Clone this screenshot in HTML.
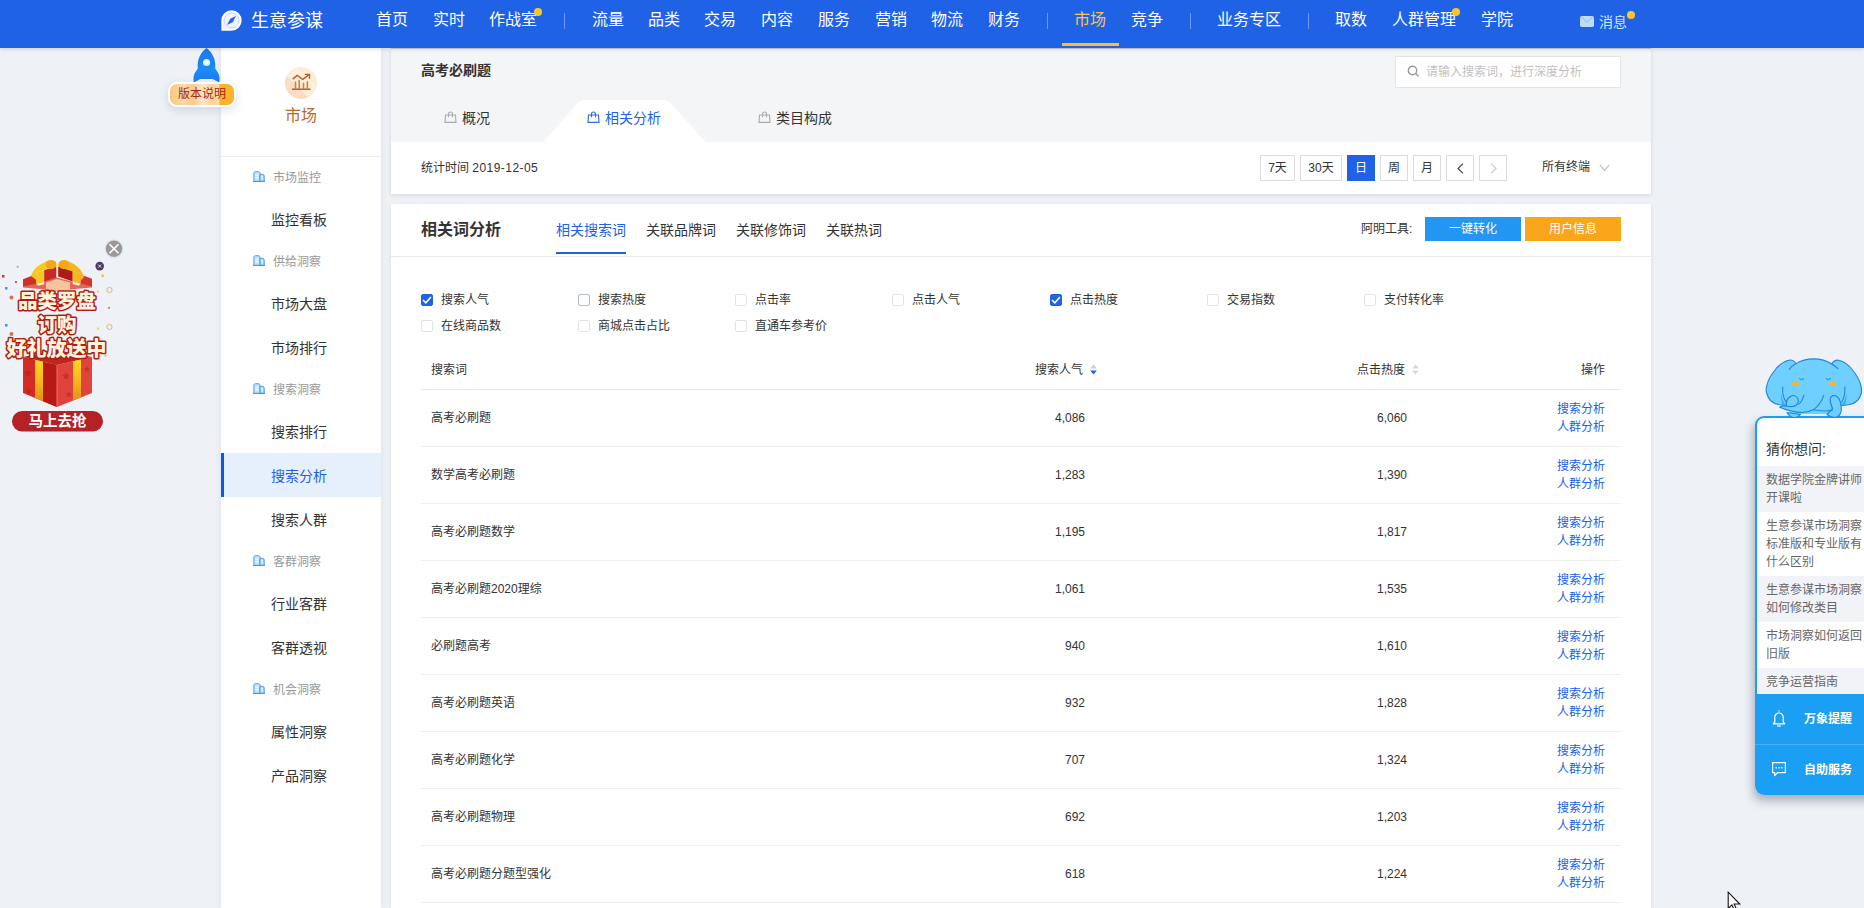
<!DOCTYPE html>
<html lang="zh-CN">
<head>
<meta charset="utf-8">
<title>生意参谋</title>
<style>
*{box-sizing:border-box;margin:0;padding:0}
html,body{width:1864px;height:908px;overflow:hidden}
body{background:#eef1f6;font-family:"Liberation Sans","Noto Sans CJK SC",sans-serif;color:#333;font-size:12px;position:relative}
.abs{position:absolute;white-space:nowrap}
/* top bar */
#top{position:absolute;left:0;top:0;width:1864px;height:48px;background:#2062e6;box-shadow:0 1px 4px rgba(0,0,0,.15);z-index:5}
#top .n{position:absolute;top:0;height:40px;line-height:40px;font-size:16px;color:#fff;white-space:nowrap}
#top .sep{position:absolute;top:13px;width:1px;height:16px;background:rgba(255,255,255,.35)}
#top .dot{position:absolute;width:8px;height:8px;border-radius:50%;background:#f9c623}
/* sidebar */
#side{position:absolute;left:221px;top:48px;width:160px;height:860px;background:#fff;box-shadow:0 0 7px rgba(60,80,140,.10)}
#side .g{position:absolute;left:52px;font-size:12px;color:#999;line-height:16px;white-space:nowrap}
#side .i{position:absolute;left:0;width:160px;height:44px;line-height:44px;padding-left:50px;font-size:14px;color:#333;white-space:nowrap}
#side .i.on{background:#e6effc;color:#2062e6;border-left:3px solid #0b5be8;padding-left:47px}
#side svg.gi{position:absolute;left:32px;width:12px;height:11px;margin-top:1px}
/* panels */
#p1{position:absolute;left:391px;top:48px;width:1260px;height:146px;background:#f4f5f7;box-shadow:0 1px 4px rgba(20,30,60,.13),inset 0 1px 0 #c9cedc}
#p1w{position:absolute;left:0;top:94px;width:1260px;height:52px;background:#fff}
#p2{position:absolute;left:391px;top:204px;width:1260px;height:704px;background:#fff;box-shadow:0 1px 4px rgba(20,30,60,.10)}
.btn{position:absolute;top:107px;height:26px;border:1px solid #dcdcdc;background:#fff;font-size:12px;line-height:24px;text-align:center;color:#333}
.btn.on{background:#2062e6;border-color:#2062e6;color:#fff}
.cb{position:absolute;width:12px;height:12px;border:1px solid #e2e2e2;border-radius:2px;background:#fff}
.cb.on{background:#2062e6;border-color:#2062e6}
.cb svg{position:absolute;left:0;top:0}
.cl{position:absolute;font-size:12px;line-height:16px;color:#333;white-space:nowrap}
.row{position:absolute;left:30px;width:1200px;height:57px;border-bottom:1px solid #efefef}
.row .k{position:absolute;left:10px;top:20px;line-height:16px;font-size:12px;color:#333}
.row .v1{position:absolute;right:536px;top:20px;line-height:16px;font-size:12px;color:#333}
.row .v2{position:absolute;right:214px;top:20px;line-height:16px;font-size:12px;color:#333}
.row .a{position:absolute;right:16px;top:10px;line-height:18px;font-size:12px;color:#2062e6;text-align:right}
.q{position:absolute;left:0;width:130px;padding:5px 0 0 9px;font-size:12px;line-height:18px;color:#666;white-space:nowrap}
</style>
</head>
<body>
<div id="top">
  <svg class="abs" style="left:221px;top:10px" width="21" height="21" viewBox="0 0 21 21"><path d="M10.5 1.2A9.3 9.3 0 1 1 10.5 19.8H1.2V10.5A9.3 9.3 0 0 1 10.5 1.2Z" fill="#eef3fe" stroke="#fff" stroke-width="1.7"/><circle cx="10.5" cy="10.5" r="7.3" fill="none" stroke="#b9cff8" stroke-width=".7"/><path d="M15 6L9.2 8.8 6 15l5.8-2.8Z" fill="#2a68e6"/></svg>
  <div class="n" style="left:251px;font-size:18px;top:1px;line-height:41px">生意参谋</div>
  <div class="n" style="left:376px">首页</div>
  <div class="n" style="left:433px">实时</div>
  <div class="n" style="left:489px">作战室</div>
  <div class="dot" style="left:534px;top:8px"></div>
  <div class="sep" style="left:564px"></div>
  <div class="n" style="left:592px">流量</div>
  <div class="n" style="left:648px">品类</div>
  <div class="n" style="left:704px">交易</div>
  <div class="n" style="left:761px">内容</div>
  <div class="n" style="left:818px">服务</div>
  <div class="n" style="left:875px">营销</div>
  <div class="n" style="left:931px">物流</div>
  <div class="n" style="left:988px">财务</div>
  <div class="sep" style="left:1047px"></div>
  <div class="n" style="left:1074px;color:#ffc34d">市场</div>
  <div class="abs" style="left:1062px;top:43px;width:57px;height:3px;background:#fbc02d"></div>
  <div class="n" style="left:1131px">竞争</div>
  <div class="sep" style="left:1190px"></div>
  <div class="n" style="left:1217px">业务专区</div>
  <div class="sep" style="left:1308px"></div>
  <div class="n" style="left:1335px">取数</div>
  <div class="n" style="left:1392px">人群管理</div>
  <div class="dot" style="left:1452px;top:8px"></div>
  <div class="n" style="left:1481px">学院</div>
  <svg class="abs" style="left:1580px;top:16px" width="14" height="11" viewBox="0 0 14 11"><rect x="0" y="0" width="14" height="11" rx="1.8" fill="#bddcf7"/><path d="M1.800 1.200l5.200 5.200 5.200-5.200" fill="none" stroke="#86bdf2" stroke-width="1"/></svg>
  <div class="n" style="left:1599px;font-size:14px;top:2px;color:#d0e6fb">消息</div>
  <div class="dot" style="left:1627px;top:11px"></div>
</div>

<svg class="abs" style="left:193px;top:48px;z-index:2" width="27" height="35" viewBox="0 0 27 35"><defs><linearGradient id="rk" x1="0" y1="0" x2="0" y2="1"><stop offset="0" stop-color="#1b76ee"/><stop offset=".6" stop-color="#1c8df6"/><stop offset="1" stop-color="#1a7af0"/></linearGradient></defs><path d="M13.500 0C7 5 4 12 4.800 20.500L1.800 25C.400 27.500.200 31 .800 34.500l6.500-3.500h12.400l6.500 3.500c.600-3.500.400-7-1-9.500L22.200 20.500C23 12 20 5 13.500 0Z" fill="url(#rk)"/><circle cx="13.500" cy="14.500" r="3.600" fill="#d6ecff"/><circle cx="13.500" cy="14.500" r="2" fill="#fff"/></svg>
<div class="abs" style="left:168px;top:82px;width:68px;height:25px;border-radius:9px;background:#fff;box-shadow:0 3px 8px rgba(120,130,160,.25);z-index:2"></div>
<div class="abs" style="left:170px;top:84px;width:64px;height:21px;border-radius:7px;background:linear-gradient(90deg,#fbc583 0,#fcd9a8 22%,#fbc98c 36%,#fde9c9 52%,#fbd09a 66%,#fcdcae 76%,#fab22b 78%,#fbb32c 100%);z-index:2;font-size:12px;line-height:21px;text-align:center;color:#9c2a14">版本说明</div>
<div id="side">
  <div class="abs" style="left:64px;top:19px;width:32px;height:32px;border-radius:50%;background:linear-gradient(45deg,#fbe6d0 0,#f9dcc4 18%,#f9dcc4 38%,#fdecd6 38%,#fef0da 68%,#fdecd2 68%,#fdecd2 100%)"></div>
  <svg class="abs" style="left:70px;top:25px" width="21" height="18" viewBox="291 73 21 18" fill="none"><path d="M295.500 88.800V81.400M299.200 88.800V80M303.500 88.800V82.800M307.400 88.800V81.200" stroke="#d27c38" stroke-width="1.500"/><path d="M292 89.300H310.500M292.700 79.100L297.100 75.400 302.900 79.300 308.700 74.900M304.800 74.400H309.500V78.700" stroke="#bd5f28" stroke-width="1.400"/></svg>
  <div class="abs" style="left:64px;top:57px;font-size:16px;line-height:22px;color:#b9682a">市场</div>
  <div class="abs" style="left:0;top:108px;width:160px;height:1px;background:#eee"></div>
  <svg class="gi" style="top:122px" viewBox="0 0 12 11"><path d="M.900 10.500V2.300Q.900 .700 2.500 .700H5.400Q7 .700 7 2.300V10.500Z" fill="#c6e3fc" stroke="#459ff2" stroke-width="1"/><path d="M7 3.300h2.400Q11.200 3.300 11.200 5.100V10.500H7Z" fill="#b0d8fb" stroke="#459ff2" stroke-width="1"/><path d="M0 10.500h12" stroke="#3f9cf1" stroke-width="1.400"/><path d="M2.300 4.300h3.200M2.300 6.500h3.200M8.200 5.700h1.800M8.200 7.700h1.800" stroke="#fff" stroke-width="1"/></svg><div class="g" style="top:122px">市场监控</div>
  <div class="i" style="top:150px">监控看板</div>
  <svg class="gi" style="top:206px" viewBox="0 0 12 11"><path d="M.900 10.500V2.300Q.900 .700 2.500 .700H5.400Q7 .700 7 2.300V10.500Z" fill="#c6e3fc" stroke="#459ff2" stroke-width="1"/><path d="M7 3.300h2.400Q11.200 3.300 11.200 5.100V10.500H7Z" fill="#b0d8fb" stroke="#459ff2" stroke-width="1"/><path d="M0 10.500h12" stroke="#3f9cf1" stroke-width="1.400"/><path d="M2.300 4.300h3.200M2.300 6.500h3.200M8.200 5.700h1.800M8.200 7.700h1.800" stroke="#fff" stroke-width="1"/></svg><div class="g" style="top:206px">供给洞察</div>
  <div class="i" style="top:234px">市场大盘</div>
  <div class="i" style="top:278px">市场排行</div>
  <svg class="gi" style="top:334px" viewBox="0 0 12 11"><path d="M.900 10.500V2.300Q.900 .700 2.500 .700H5.400Q7 .700 7 2.300V10.500Z" fill="#c6e3fc" stroke="#459ff2" stroke-width="1"/><path d="M7 3.300h2.400Q11.200 3.300 11.200 5.100V10.500H7Z" fill="#b0d8fb" stroke="#459ff2" stroke-width="1"/><path d="M0 10.500h12" stroke="#3f9cf1" stroke-width="1.400"/><path d="M2.300 4.300h3.200M2.300 6.500h3.200M8.200 5.700h1.800M8.200 7.700h1.800" stroke="#fff" stroke-width="1"/></svg><div class="g" style="top:334px">搜索洞察</div>
  <div class="i" style="top:362px">搜索排行</div>
  <div class="i on" style="top:405px;line-height:46px">搜索分析</div>
  <div class="i" style="top:450px">搜索人群</div>
  <svg class="gi" style="top:506px" viewBox="0 0 12 11"><path d="M.900 10.500V2.300Q.900 .700 2.500 .700H5.400Q7 .700 7 2.300V10.500Z" fill="#c6e3fc" stroke="#459ff2" stroke-width="1"/><path d="M7 3.300h2.400Q11.200 3.300 11.200 5.100V10.500H7Z" fill="#b0d8fb" stroke="#459ff2" stroke-width="1"/><path d="M0 10.500h12" stroke="#3f9cf1" stroke-width="1.400"/><path d="M2.300 4.300h3.200M2.300 6.500h3.200M8.200 5.700h1.800M8.200 7.700h1.800" stroke="#fff" stroke-width="1"/></svg><div class="g" style="top:506px">客群洞察</div>
  <div class="i" style="top:534px">行业客群</div>
  <div class="i" style="top:578px">客群透视</div>
  <svg class="gi" style="top:634px" viewBox="0 0 12 11"><path d="M.900 10.500V2.300Q.900 .700 2.500 .700H5.400Q7 .700 7 2.300V10.500Z" fill="#c6e3fc" stroke="#459ff2" stroke-width="1"/><path d="M7 3.300h2.400Q11.200 3.300 11.200 5.100V10.500H7Z" fill="#b0d8fb" stroke="#459ff2" stroke-width="1"/><path d="M0 10.500h12" stroke="#3f9cf1" stroke-width="1.400"/><path d="M2.300 4.300h3.200M2.300 6.500h3.200M8.200 5.700h1.800M8.200 7.700h1.800" stroke="#fff" stroke-width="1"/></svg><div class="g" style="top:634px">机会洞察</div>
  <div class="i" style="top:662px">属性洞察</div>
  <div class="i" style="top:706px">产品洞察</div>
</div>


<!-- left promo -->
<div id="ad" style="position:absolute;left:0;top:236px;width:130px;height:200px">
  <svg class="abs" style="left:0;top:0" width="130" height="200" viewBox="0 236 130 200">
    <defs>
      <linearGradient id="yl" x1="0" y1="0" x2="0" y2="1"><stop offset="0" stop-color="#fbd91f"/><stop offset=".55" stop-color="#f7b41c"/><stop offset="1" stop-color="#e48f16"/></linearGradient>
    </defs>
    <!-- confetti -->
    <g>
      <rect x="2" y="275" width="2.500" height="2.500" fill="#d8342c"/><rect x="15" y="281" width="2" height="2" fill="#e0553a"/><rect x="5" y="287" width="2.500" height="2.500" fill="#2f9bf0"/><rect x="5" y="324" width="2.500" height="2.500" fill="#2f9bf0"/>
      <path d="M16 267l2-1.500 1 2.500Z" fill="#7fb0f0"/><circle cx="11.500" cy="297.500" r="2" fill="#c07a55"/><circle cx="11.500" cy="334" r="2" fill="#c07a55"/>
      <rect x="101.500" y="274.500" width="2.500" height="2.500" fill="#f3c13a" transform="rotate(30 102.700 275.700)"/><rect x="97" y="290.500" width="2" height="2" fill="#f3d04a"/><rect x="97" y="327.500" width="2" height="2" fill="#f3d04a"/>
      <circle cx="109.500" cy="290" r="2.600" fill="none" stroke="#e9b27a" stroke-width="1"/><circle cx="109.500" cy="327" r="2.600" fill="none" stroke="#e9b27a" stroke-width="1"/>
      <path d="M107.500 308l2.500-1.500-.5 2.500Z" fill="#d8453a"/><path d="M105 354l2.500 1-1.500 2-2-1Z" fill="#f2cf3a"/>
    </g>
    <!-- box body -->
    <path d="M23 357L57 365V407L23 393Z" fill="#d42b24"/>
    <path d="M57 365L92 357V393L57 407Z" fill="#e0433c"/>
    <path d="M23 357L57 350 92 357 57 365Z" fill="#c3251e"/>
    <path d="M43 362L57 365V407L43 401.200Z" fill="#b51b13"/>
    <path d="M35 359.800L43 361.700V401.200L35 398Z" fill="url(#yl)"/>
    <path d="M73 361.300L81 359.500V397.400L73 400.600Z" fill="url(#yl)"/>
    <path d="M57 365V407" stroke="#f3837a" stroke-width=".8"/>
    <g fill="#bf2620"><path d="M28 369l1.200 2.600 2.800.3-2.100 1.900.6 2.800-2.500-1.400-2.500 1.400.6-2.800-2.100-1.900 2.800-.3Z"/><path d="M29 388l1 2.200 2.400.3-1.800 1.600.5 2.400-2.100-1.200-2.100 1.200.5-2.400-1.800-1.600 2.400-.3Z"/></g>
    <g fill="#c9302a"><path d="M66 372l1.200 2.600 2.800.3-2.100 1.900.6 2.800-2.500-1.400-2.500 1.400.6-2.800-2.100-1.900 2.800-.3Z"/><path d="M69 391l1 2.200 2.400.3-1.800 1.600.5 2.400-2.100-1.200-2.100 1.200.5-2.400-1.800-1.600 2.400-.3Z"/><path d="M87 366l.9 2 2.200.2-1.600 1.500.4 2.200-1.900-1.100-1.900 1.100.4-2.200-1.600-1.500 2.200-.2Z"/></g>
    <!-- lid -->
    <path d="M23 286L44 281 57 277.500 72.700 281.700 92 286V287.500L57 290.500 23 287.500Z" fill="#e8635a"/>
    <path d="M46 282.500L57 279 70 282.500V290H46Z" fill="#f6c49c"/>
    <path d="M23 279.200L36.300 274V283.800L23 286.500Z" fill="#cf3129"/>
    <path d="M36.300 272.500L44.200 270.500V282L36.300 283.800Z" fill="#f8c81c"/>
    <path d="M44.200 270L56.300 266.500V277.700L44.200 281.500Z" fill="#c62a22"/>
    <path d="M58.200 266.500L72.700 271.300V281.500L58.200 276.500Z" fill="#b01a12"/>
    <path d="M72.700 271.300L80.600 273.800V283.800L72.700 281.700Z" fill="#f5b818"/>
    <path d="M80.600 274.400L92 278.800V286.500L80.600 283.800Z" fill="#d4362d"/>
    <!-- bow -->
    <path d="M31 276C33 269 40 263.500 48 261 54 260 57 263 56.300 266.500L44.200 270 36.300 272.500 36.300 280Z" fill="#f8c81c"/>
    <path d="M84 277C82 269 75 263.500 67 261 61 260 58 263 58.200 266.500L72.700 271.300 80.600 273.800 80.600 281Z" fill="#f5b818"/>
    <ellipse cx="51" cy="264.500" rx="5.500" ry="4.500" fill="#f3a916"/>
    <ellipse cx="64" cy="264.500" rx="5.500" ry="4.500" fill="#f3a916"/>
    
    <path d="M36.300 283.800l7.900-1.800v2.200l-6 1.600Z" fill="#fff4d6"/><path d="M80.600 283.800l-7.900-2.100v2.300l6 1.800Z" fill="#fff4d6"/>
    <!-- text -->
    <g font-family="Liberation Sans,Noto Sans CJK SC,sans-serif" font-weight="900" text-anchor="middle" fill="#fff4dd" stroke="#b01d10" stroke-width="3" paint-order="stroke" stroke-linejoin="round">
      <text x="57" y="307.500" font-size="19.500">品类罗盘</text>
      <text x="57" y="331.500" font-size="19.500">订购</text>
      <text x="56.500" y="355.500" font-size="20">好礼放送中</text>
    </g>
    <!-- button -->
    <rect x="12" y="411" width="91" height="20.500" rx="10.200" fill="#b62126"/>
    <text x="57.500" y="426.300" font-family="Liberation Sans,Noto Sans CJK SC,sans-serif" font-weight="bold" font-size="14.500" text-anchor="middle" fill="#fff">马上去抢</text>
    <!-- close -->
    <circle cx="114" cy="248.700" r="9.500" fill="#e4e4e6"/><circle cx="114" cy="248.700" r="8.200" fill="#999"/>
    <path d="M109.500 244.200l9 9M118.500 244.200l-9 9" stroke="#fff" stroke-width="1.600"/>
    <circle cx="99.700" cy="266.100" r="4.300" fill="#4b3b60"/>
    <path d="M98.200 264.600l3 3M101.200 264.600l-3 3" stroke="#e8e0f0" stroke-width="1"/>
  </svg>
</div>

<div id="p1">
  <div class="abs" style="left:30px;top:13px;font-size:14px;font-weight:bold;line-height:18px;color:#333">高考必刷题</div>
  <div class="abs" style="left:1004px;top:8px;width:226px;height:32px;background:#fff;border:1px solid #e3e3e3"></div>
  <svg class="abs" style="left:1016px;top:17px" width="13" height="13" viewBox="0 0 13 13" fill="none" stroke="#999" stroke-width="1.4"><circle cx="5.500" cy="5.500" r="4.200"/><path d="M8.600 8.600l3 3"/></svg>
  <div class="abs" style="left:1035px;top:16px;font-size:12px;line-height:16px;color:#bfbfbf">请输入搜索词，进行深度分析</div>
  <div id="p1w"></div>
  <svg class="abs" style="left:150px;top:52px" width="170" height="42" viewBox="0 0 170 42"><path d="M2 42L35.500 4.500Q39.500 0 45 0H121Q126.500 0 130.500 4.500L165 42Z" fill="#fff"/></svg>
  <svg class="abs" style="left:53px;top:63px" width="13" height="12" viewBox="0 0 13 12" fill="none" stroke="#aaa" stroke-width="1.100"><path d="M1.500 4h10l.500 7.400H1Z"/><path d="M4.500 6.300V3a2 2 0 0 1 4 0v3.300"/></svg>
  <svg class="abs" style="left:196px;top:63px" width="13" height="12" viewBox="0 0 13 12" fill="none" stroke="#2a6ae6" stroke-width="1.100"><path d="M1.500 4h10l.500 7.400H1Z"/><path d="M4.500 6.300V3a2 2 0 0 1 4 0v3.300"/></svg>
  <svg class="abs" style="left:367px;top:63px" width="13" height="12" viewBox="0 0 13 12" fill="none" stroke="#aaa" stroke-width="1.100"><path d="M1.500 4h10l.500 7.400H1Z"/><path d="M4.500 6.300V3a2 2 0 0 1 4 0v3.300"/></svg>
  <div class="abs" style="left:71px;top:61px;font-size:14px;line-height:18px;color:#333">概况</div>
  <div class="abs" style="left:214px;top:61px;font-size:14px;line-height:18px;color:#2062e6">相关分析</div>
  <div class="abs" style="left:385px;top:61px;font-size:14px;line-height:18px;color:#333">类目构成</div>
  <div class="abs" style="left:30px;top:112px;font-size:12px;line-height:16px;color:#333">统计时间 <span style="letter-spacing:.45px">2019-12-05</span></div>
  <div class="btn" style="left:869px;width:35px">7天</div>
  <div class="btn" style="left:909px;width:42px">30天</div>
  <div class="btn on" style="left:956px;width:28px">日</div>
  <div class="btn" style="left:989px;width:28px">周</div>
  <div class="btn" style="left:1022px;width:28px">月</div>
  <div class="btn" style="left:1055px;width:28px"><svg style="position:absolute;left:10px;top:7px" width="7" height="11" viewBox="0 0 7 11" fill="none" stroke="#444" stroke-width="1.200"><path d="M6 .600L1 5.500l5 4.900"/></svg></div>
  <div class="btn" style="left:1088px;width:28px"><svg style="position:absolute;left:10px;top:7px" width="7" height="11" viewBox="0 0 7 11" fill="none" stroke="#ccc" stroke-width="1.200"><path d="M1 .600l5 4.900-5 4.900"/></svg></div>
  <div class="abs" style="left:1151px;top:111px;font-size:12px;line-height:16px;color:#333">所有终端</div>
  <svg class="abs" style="left:1208px;top:116px" width="11" height="8" viewBox="0 0 11 8" fill="none" stroke="#c8c8c8" stroke-width="1.200"><path d="M.800 1l4.700 5.500L10.200 1"/></svg>
</div>

<div id="p2">
  <div class="abs" style="left:30px;top:15px;font-size:16px;font-weight:bold;line-height:22px;color:#333">相关词分析</div>
  <div class="abs" style="left:165px;top:17px;font-size:14px;line-height:18px;color:#2062e6">相关搜索词</div>
  <div class="abs" style="left:255px;top:17px;font-size:14px;line-height:18px">关联品牌词</div>
  <div class="abs" style="left:345px;top:17px;font-size:14px;line-height:18px">关联修饰词</div>
  <div class="abs" style="left:435px;top:17px;font-size:14px;line-height:18px">关联热词</div>
  <div class="abs" style="left:165px;top:48px;width:70px;height:2px;background:#2062e6"></div>
  <div class="abs" style="left:0;top:52px;width:1260px;height:1px;background:#e8e8e8"></div>
  <div class="abs" style="left:970px;top:17px;font-size:12px;line-height:16px">阿明工具:</div>
  <div class="abs" style="left:1034px;top:13px;width:96px;height:24px;background:#2196f3;color:#fff;text-align:center;line-height:24px;font-size:12px">一键转化</div>
  <div class="abs" style="left:1134px;top:13px;width:96px;height:24px;background:#faa61a;color:#fff;text-align:center;line-height:24px;font-size:12px">用户信息</div>

  <div class="cb on" style="left:30px;top:90px"><svg width="10" height="10" viewBox="0 0 10 10"><path d="M1 5l2.800 2.800L9 2" fill="none" stroke="#fff" stroke-width="1.500"/></svg></div><div class="cl" style="left:50px;top:88px">搜索人气</div>
  <div class="cb" style="left:187px;top:90px;border-color:#a9b8e2"></div><div class="cl" style="left:207px;top:88px">搜索热度</div>
  <div class="cb" style="left:344px;top:90px"></div><div class="cl" style="left:364px;top:88px">点击率</div>
  <div class="cb" style="left:501px;top:90px"></div><div class="cl" style="left:521px;top:88px">点击人气</div>
  <div class="cb on" style="left:659px;top:90px"><svg width="10" height="10" viewBox="0 0 10 10"><path d="M1 5l2.800 2.800L9 2" fill="none" stroke="#fff" stroke-width="1.500"/></svg></div><div class="cl" style="left:679px;top:88px">点击热度</div>
  <div class="cb" style="left:816px;top:90px"></div><div class="cl" style="left:836px;top:88px">交易指数</div>
  <div class="cb" style="left:973px;top:90px"></div><div class="cl" style="left:993px;top:88px">支付转化率</div>
  <div class="cb" style="left:30px;top:116px"></div><div class="cl" style="left:50px;top:114px">在线商品数</div>
  <div class="cb" style="left:187px;top:116px"></div><div class="cl" style="left:207px;top:114px">商城点击占比</div>
  <div class="cb" style="left:344px;top:116px"></div><div class="cl" style="left:364px;top:114px">直通车参考价</div>

  <div class="cl" style="left:40px;top:158px">搜索词</div>
  <div class="cl" style="left:644px;top:158px">搜索人气</div><svg class="abs" style="left:699px;top:160px" width="7" height="11" viewBox="0 0 7 11"><path d="M3.500 .500L6.800 4.500H.200Z" fill="#ccd0d8"/><path d="M3.500 10.500L.200 6.500H6.800Z" fill="#2062e6"/></svg>
  <div class="cl" style="left:966px;top:158px">点击热度</div><svg class="abs" style="left:1021px;top:160px" width="7" height="11" viewBox="0 0 7 11"><path d="M3.500 .500L6.800 4.500H.200Z" fill="#d4d7de"/><path d="M3.500 10.500L.200 6.500H6.800Z" fill="#d4d7de"/></svg>
  <div class="cl" style="left:1190px;top:158px">操作</div>
  <div class="abs" style="left:30px;top:185px;width:1200px;height:1px;background:#e8e8e8"></div>

  <div class="row" style="top:186px"><div class="k">高考必刷题</div><div class="v1">4,086</div><div class="v2">6,060</div><div class="a">搜索分析<br>人群分析</div></div>
  <div class="row" style="top:243px"><div class="k">数学高考必刷题</div><div class="v1">1,283</div><div class="v2">1,390</div><div class="a">搜索分析<br>人群分析</div></div>
  <div class="row" style="top:300px"><div class="k">高考必刷题数学</div><div class="v1">1,195</div><div class="v2">1,817</div><div class="a">搜索分析<br>人群分析</div></div>
  <div class="row" style="top:357px"><div class="k">高考必刷题2020理综</div><div class="v1">1,061</div><div class="v2">1,535</div><div class="a">搜索分析<br>人群分析</div></div>
  <div class="row" style="top:414px"><div class="k">必刷题高考</div><div class="v1">940</div><div class="v2">1,610</div><div class="a">搜索分析<br>人群分析</div></div>
  <div class="row" style="top:471px"><div class="k">高考必刷题英语</div><div class="v1">932</div><div class="v2">1,828</div><div class="a">搜索分析<br>人群分析</div></div>
  <div class="row" style="top:528px"><div class="k">高考必刷题化学</div><div class="v1">707</div><div class="v2">1,324</div><div class="a">搜索分析<br>人群分析</div></div>
  <div class="row" style="top:585px"><div class="k">高考必刷题物理</div><div class="v1">692</div><div class="v2">1,203</div><div class="a">搜索分析<br>人群分析</div></div>
  <div class="row" style="top:642px"><div class="k">高考必刷题分题型强化</div><div class="v1">618</div><div class="v2">1,224</div><div class="a">搜索分析<br>人群分析</div></div>
</div>

<!-- right helper widget -->
<div class="abs" style="left:1755px;top:416px;width:130px;height:379px;border-radius:9px 0 0 9px;background:#fff;box-shadow:-2px 6px 10px rgba(60,70,100,.38)"></div>
<div class="abs" style="left:1755px;top:416px;width:130px;height:290px;border:2px solid #1a9ff5;border-radius:9px 0 0 0;background:#fff;overflow:hidden">
  <div class="abs" style="left:9px;top:21px;font-size:14px;line-height:20px;color:#333">猜你想问:</div>
  <div class="q" style="top:48px;height:46px;background:#f2f3f9">数据学院金牌讲师<br>开课啦</div>
  <div class="q" style="top:94px;height:64px">生意参谋市场洞察<br>标准版和专业版有<br>什么区别</div>
  <div class="q" style="top:158px;height:46px;background:#f2f3f9">生意参谋市场洞察<br>如何修改类目</div>
  <div class="q" style="top:204px;height:46px">市场洞察如何返回<br>旧版</div>
  <div class="q" style="top:250px;height:28px;background:#f2f3f9">竞争运营指南</div>
</div>
<div class="abs" style="left:1755px;top:694px;width:130px;height:101px;background:#1a9ff5;border-radius:0 0 0 9px">
  <div class="abs" style="left:0;top:50px;width:130px;height:1px;background:#48b0f4"></div>
  <svg class="abs" style="left:17px;top:16px" width="14" height="17" viewBox="0 0 14 17" fill="none" stroke="#fff" stroke-width="1.200"><path d="M7 1.500V.300M2.800 12V7.200a4.200 4.200 0 0 1 8.400 0V12l1.500 1.800H1.300Z" stroke-linejoin="round"/><path d="M5 16h4"/></svg>
  <div class="abs" style="left:49px;top:17px;font-size:12px;line-height:16px;font-weight:bold;color:#fff">万象提醒</div>
  <svg class="abs" style="left:16px;top:67px" width="16" height="16" viewBox="0 0 16 16" fill="none" stroke="#fff" stroke-width="1.200"><path d="M1.600 1.600h12.800v10H6.500L3.600 14.500V11.600h-2Z" stroke-linejoin="round"/><path d="M4.600 6.700h1.300M7.400 6.700h1.300M10.200 6.700h1.300" stroke-width="1.400"/></svg>
  <div class="abs" style="left:49px;top:68px;font-size:12px;line-height:16px;font-weight:bold;color:#fff">自助服务</div>
</div>
<svg class="abs" style="left:1760px;top:352px" width="104" height="70" viewBox="1760 352 104 70">
  <g stroke="#1f86d6" stroke-width="1.100" fill="#6fd0ff" stroke-linejoin="round" stroke-linecap="round">
    <path d="M1796 363.600C1794 360.500 1791 359.800 1789 360.200 1783 361.500 1778 366 1775 370 1771 375 1768 380 1767 385 1766 388 1766 391 1766.600 393 1767.500 396 1768.500 398.500 1770.500 400.500 1773 403 1776 404.200 1779.500 404.800L1790 406 1796 380Z"/>
    <path d="M1831.700 364C1833.500 361 1836.500 359.800 1838.600 360.200 1844.500 361.500 1849.500 366 1852.500 370 1856.500 375 1859.500 380 1860.800 385 1861.600 388 1861.800 391 1861.400 393 1860.500 396 1859.500 398.500 1857.500 400.500 1855 403 1852 404.200 1848.500 404.800L1838 406 1832 380Z"/>
  </g>
  <path d="M1796 363.600C1801 360.500 1807 358.900 1813.500 358.900 1820 358.900 1826.500 360.500 1831.700 364 1840 370 1844.500 379 1844.800 387 1845 393 1844 398 1841.700 402L1838 414H1790L1786.600 403C1783.500 398 1782.500 393 1782.700 387 1783 379 1788 369 1796 363.600Z" fill="#6fd0ff"/>
  <path d="M1781.200 393C1781.600 398 1783 402 1786 405.500L1782.500 405C1781.200 401 1780.800 397 1781.200 393Z" fill="#3aa8f5"/>
  <path d="M1846.300 393C1845.900 398 1844.500 402 1841.500 405.500L1845 405C1846.300 401 1846.700 397 1846.300 393Z" fill="#3aa8f5"/>
  <g stroke="#1f86d6" stroke-width="1.100" fill="none" stroke-linecap="round" stroke-linejoin="round">
    <path d="M1789.300 369.300C1791 367 1793.500 365 1796 363.600 1801 360.500 1807 358.900 1813.500 358.900 1820 358.900 1826.500 360.500 1831.700 364 1834 365.200 1836 366.800 1837.900 368.600"/>
    <path d="M1782.700 387.100C1782.300 392 1783.200 398 1786.600 403"/>
    <path d="M1844.800 387.100C1845.200 392 1844.300 398 1841.700 402.100"/>
    <path d="M1803.900 395.200C1802.800 399.500 1800.800 403 1797.800 405.300"/>
  </g>
  <g stroke="#1f86d6" stroke-width="1.100" fill="#6fd0ff" stroke-linejoin="round" stroke-linecap="round">
    <path d="M1787 412.500C1789 416 1792 417.800 1795 417.500 1797.500 417.200 1799.500 416 1800.500 414.500Z"/>
    <path d="M1827 414.500C1830 417 1834 418 1837 416.800 1840 415.500 1841.500 412 1841.300 408 1841.100 403 1839.500 398.500 1836.500 396.300 1834 394.600 1831 395.500 1830.300 398.500 1829.800 401 1830.800 404.500 1832.600 408.500Z"/>
    <path d="M1823.600 395.600C1821.500 402 1818 406.500 1813.200 409.800 1808 412.500 1802 413 1797 412.100 1791 411 1785 409.800 1779.700 407.200 1781.500 406 1784 405.600 1786.600 406 1785.800 402 1787.500 398 1790.800 396.200 1794 394.500 1797.500 396.500 1798.200 399.800 1798.700 402.500 1797.500 404.500 1794.700 406"/>
    <path d="M1786.600 406C1789.500 406.800 1792.500 406.800 1794.700 406"/>
    <path d="M1813.200 409.800C1820 411.200 1827 411.200 1832.500 410.200" fill="none"/>
  </g>
  <path d="M1799.200 378.500q2.400 2.200 4.800 0M1826 378.500q2.400 2.200 4.800 0" fill="none" stroke="#1f7fcb" stroke-width="1"/>
  <rect x="1792" y="382" width="7" height="3.800" rx="1.900" fill="#f9b62a"/>
  <rect x="1829.300" y="382" width="7" height="3.800" rx="1.900" fill="#f9b62a"/>
</svg>
<!-- cursor -->
<svg class="abs" style="left:1727px;top:891px" width="15" height="20" viewBox="0 0 15 20"><path d="M1.200 1.200V17.500l3.700-3.600 2.700 6.100 2.200-1-2.700-6H12.800Z" fill="#fff" stroke="#1a1010" stroke-width="1.100"/></svg>
</body>
</html>
